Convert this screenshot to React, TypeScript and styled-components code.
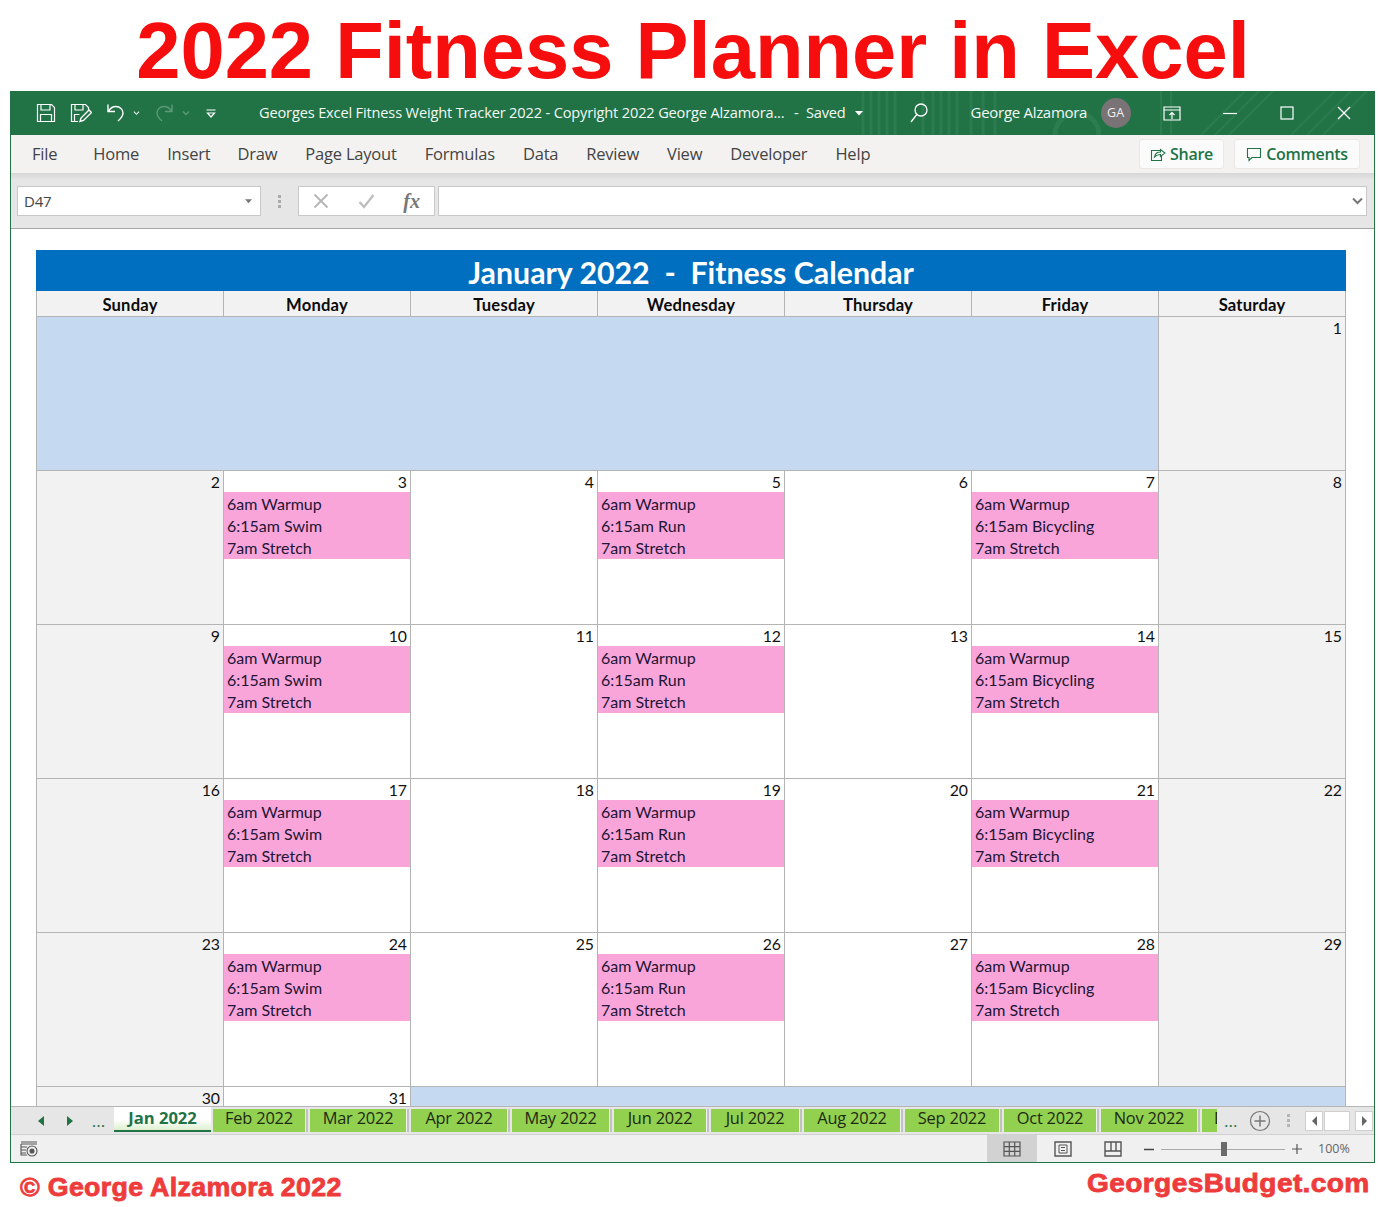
import React from "react";
import styled, { createGlobalStyle } from "styled-components";

const Global = createGlobalStyle`
  html, body { margin: 0; padding: 0; background: #fff; }
  body { font-family: "Open Sans", "Liberation Sans", sans-serif; }
`;

const Page = styled.div`
  width: 1380px;
  height: 1207px;
  display: flex;
  flex-direction: column;
  overflow: hidden;
  background: #fff;
`;

const Heading = styled.h1`
  margin: 0;
  height: 91px;
  flex: none;
  box-sizing: border-box;
  display: flex;
  align-items: center;
  justify-content: center;
  padding: 11px 0 0 6px;
  font: 700 79.5px/1 "Liberation Sans", Arial, sans-serif;
  color: #f60d0d;
  white-space: nowrap;
`;

const Window = styled.div`
  margin-left: 10px;
  width: 1365px;
  height: 1072px;
  flex: none;
  box-sizing: border-box;
  border: 1px solid #217346;
  border-top: 0;
  display: flex;
  flex-direction: column;
  background: #fff;
`;

const TitleBar = styled.div`
  height: 44px;
  flex: none;
  position: relative;
  background: #217346;
  display: flex;
  align-items: center;
  padding-left: 17px;
  color: #fff;
  overflow: hidden;
`;

const TitleTexture = styled.svg`
  position: absolute;
  left: 0;
  top: 0;
  pointer-events: none;
`;

const Slot = styled.div<{ $w: number; $ml?: number }>`
  width: ${(p) => p.$w}px;
  margin-left: ${(p) => p.$ml ?? 0}px;
  flex: none;
  height: 100%;
  display: flex;
  align-items: center;
  justify-content: center;
  position: relative;
`;

const DocTitle = styled.div`
  position: relative;
  margin-left: 33px;
  padding-bottom: 2px;
  font: 400 14.6px/1 "Open Sans", sans-serif;
  letter-spacing: -0.16px;
  white-space: nowrap;
  color: #f2f7f4;
`;

const SavedLabel = styled.span`
  margin-left: 6px;
`;

const UserName = styled.div`
  position: relative;
  margin-left: 41px;
  width: 117px;
  padding-bottom: 1px;
  font: 400 15px/1 "Open Sans", sans-serif;
  letter-spacing: -0.3px;
  white-space: nowrap;
  color: #f2f7f4;
`;

const Avatar = styled.div`
  position: relative;
  margin-left: 13px;
  width: 30px;
  height: 30px;
  border-radius: 50%;
  flex: none;
  background: #7a7375;
  color: #f0eeee;
  display: flex;
  align-items: center;
  justify-content: center;
  font: 400 12.5px/1 "Open Sans", sans-serif;
`;

const RibbonTabs = styled.div`
  height: 38px;
  flex: none;
  box-sizing: border-box;
  background: #f3f2f1;
  display: flex;
  align-items: center;
  padding-left: 21px;
  color: #444;
  font: 400 16.5px/1 "Open Sans", sans-serif;
  letter-spacing: -0.2px;
`;

const RibbonTab = styled.div<{ $ml: number }>`
  margin-left: ${(p) => p.$ml}px;
  white-space: nowrap;
`;

const RibbonRight = styled.div`
  margin-left: auto;
  margin-right: 14px;
  display: flex;
  gap: 10px;
`;

const RibbonButton = styled.div<{ $w: number }>`
  width: ${(p) => p.$w}px;
  height: 30px;
  box-sizing: border-box;
  background: #fbfbfb;
  border: 1px solid #e9e8e7;
  border-radius: 3px;
  display: flex;
  align-items: center;
  justify-content: center;
  gap: 4px;
  color: #217346;
  font: 600 16px/1 "Open Sans", sans-serif;
  letter-spacing: -0.3px;
`;

const FormulaBar = styled.div`
  height: 56px;
  flex: none;
  box-sizing: border-box;
  padding: 13px 7px 12px 6px;
  display: flex;
  align-items: stretch;
  background: linear-gradient(#d6d6d6 0, #e6e6e6 7px, #e6e6e6 100%);
  border-bottom: 1px solid #a5a5a5;
`;

const FieldBox = styled.div`
  background: #fff;
  border: 1px solid #c8c8c8;
  box-sizing: border-box;
  display: flex;
  align-items: center;
`;

const NameBox = styled(FieldBox)`
  width: 244px;
  padding: 0 8px 0 6px;
  justify-content: space-between;
  font: 400 15px/1 "Open Sans", sans-serif;
  letter-spacing: -0.2px;
  color: #444;
`;

const Grip = styled.div`
  width: 37px;
  display: flex;
  align-items: center;
  justify-content: center;
`;

const FxBox = styled(FieldBox)`
  width: 137px;
  padding: 0 14px;
  justify-content: space-between;
`;

const FxLabel = styled.span`
  font: italic 700 20px/1 "Liberation Serif", serif;
  color: #777;
`;

const Input = styled(FieldBox)`
  flex: 1;
  margin-left: 3px;
  justify-content: flex-end;
  padding-right: 3px;
`;

const Sheet = styled.div`
  flex: 1;
  min-height: 0;
  overflow: hidden;
  padding: 21px 0 0 25px;
  background: #fff;
`;

const Calendar = styled.div`
  width: 1310px;
  display: grid;
  grid-template-columns: repeat(7, 187px) 1px;
  grid-auto-rows: 154px;
  grid-template-rows: 41px 25px;
  font-family: Lato, "Liberation Sans", sans-serif;
  color: #111;
`;

const Banner = styled.div`
  grid-column: 1 / -1;
  background: #006fc0;
  color: #fff;
  display: flex;
  align-items: center;
  justify-content: center;
  font: 700 30.3px/1 Lato, sans-serif;
  white-space: pre;
  padding-top: 3px;
  box-sizing: border-box;
`;

const Weekday = styled.div`
  background: #f2f2f2;
  border-left: 1px solid #b4b4b4;
  box-sizing: border-box;
  display: flex;
  align-items: center;
  justify-content: center;
  font: 700 16.6px/1 Lato, sans-serif;
  letter-spacing: 0.2px;
  color: #0c0c0c;
  padding-top: 3px;
`;

const RightRule = styled.div`
  background: #b4b4b4;
`;

const Blank = styled.div<{ $span: number }>`
  grid-column: span ${(p) => p.$span};
  background: #c5d9f1;
  box-sizing: border-box;
  border-top: 1px solid #b4b4b4;
  border-left: 1px solid #b4b4b4;
`;

const Day = styled.div<{ $weekend?: boolean }>`
  background: ${(p) => (p.$weekend ? "#f2f2f2" : "#fff")};
  box-sizing: border-box;
  border-top: 1px solid #b4b4b4;
  border-left: 1px solid #b4b4b4;
  display: flex;
  flex-direction: column;
`;

const DayNumber = styled.div`
  height: 21px;
  flex: none;
  text-align: right;
  padding-right: 3px;
  font: 400 15.8px/22px Lato, sans-serif;
  color: #111;
`;

const Workout = styled.div`
  height: 67px;
  flex: none;
  background: #f9a5da;
  padding: 1px 0 0 3px;
  box-sizing: border-box;
  font: 400 16px/22px Lato, sans-serif;
  color: #231535;
  white-space: nowrap;
`;

const TabBar = styled.div`
  height: 29px;
  flex: none;
  box-sizing: border-box;
  display: flex;
  background: #e6e6e6;
  border-top: 1px solid #b5b5b5;
  border-bottom: 1px solid #d0d0d0;
`;

const TabNav = styled.div`
  width: 103px;
  flex: none;
  display: flex;
  align-items: center;
  padding-left: 15px;
  box-sizing: border-box;
`;

const NavCell = styled.div`
  width: 29px;
  flex: none;
  display: flex;
  align-items: center;
  justify-content: center;
`;

const Ellipsis = styled.span`
  font: 400 17px/1 "Open Sans", sans-serif;
  color: #217346;
`;

const ActiveTab = styled.div`
  width: 97px;
  height: 25px;
  flex: none;
  box-sizing: border-box;
  background: linear-gradient(#fff 55%, #dcefcf 100%);
  border-bottom: 2px solid #217346;
  color: #217346;
  font: 700 16.6px/21px "Open Sans", sans-serif;
  letter-spacing: 0;
  text-align: center;
  margin-right: 2px;
`;

const SheetTab = styled.div<{ $w: number }>`
  width: ${(p) => p.$w}px;
  height: 23px;
  margin: 2px 5px 0 0;
  flex: none;
  background: #92d050;
  box-shadow: 1px 0 0 #f2f2f2, 3px 0 0 #c2c2c2;
  color: #1d2a12;
  font: 400 16.4px/17px "Open Sans", sans-serif;
  letter-spacing: -0.2px;
  text-align: center;
  white-space: nowrap;
`;

const ClippedTab = styled(SheetTab)`
  text-align: left;
  padding-left: 12px;
  margin-right: 0;
  box-sizing: border-box;
  box-shadow: none;
  overflow: hidden;
`;

const TabTail = styled.div`
  flex: 1;
  display: flex;
  align-items: center;
  padding-left: 7px;
  position: relative;
`;

const TailDots = styled(Ellipsis)`
  width: 25px;
`;

const ScrollBox = styled.div<{ $w: number; $ml: number }>`
  width: ${(p) => p.$w}px;
  margin-left: ${(p) => p.$ml}px;
  height: 20px;
  flex: none;
  background: #fff;
  border: 1px solid #cfcfcf;
  box-sizing: border-box;
  display: flex;
  align-items: center;
  justify-content: center;
`;

const StatusBar = styled.div`
  height: 27px;
  flex: none;
  background: #f0f0f0;
  display: flex;
  align-items: center;
  padding-left: 9px;
  color: #555;
`;

const ViewButton = styled.div<{ $on?: boolean; $ml?: number }>`
  width: 50px;
  height: 100%;
  margin-left: ${(p) => p.$ml ?? 0}px;
  background: ${(p) => (p.$on ? "#d2d2d2" : "transparent")};
  display: flex;
  align-items: center;
  justify-content: center;
`;

const ZoomSlider = styled.div`
  width: 124px;
  height: 1px;
  margin: 1px 6px 0;
  background: #aaa;
  position: relative;
`;

const ZoomThumb = styled.div`
  position: absolute;
  left: 60px;
  top: -7px;
  width: 6px;
  height: 14px;
  background: #6b6b6b;
`;

const ZoomPct = styled.div`
  margin-left: 15px;
  padding-top: 2px;
  font: 400 12.5px/1 "Open Sans", sans-serif;
  color: #666;
`;

const ZoomSign = styled.div<{ $ml?: number }>`
  width: 12px;
  margin-left: ${(p) => p.$ml ?? 0}px;
  padding-top: 1px;
  display: flex;
  justify-content: center;
`;

const Footer = styled.div`
  flex: 1;
  display: flex;
  justify-content: space-between;
  padding: 8px 10px 0 20px;
  color: #ee3c3c;
  font: 700 25px/1 "Liberation Sans", sans-serif;
  -webkit-text-stroke: 0.8px #ee3c3c;
  white-space: nowrap;
`;

const FooterLeft = styled.div`
  padding-top: 4px;
  letter-spacing: 0.3px;
  transform: scaleX(1.07);
  transform-origin: left center;
`;

const FooterRight = styled.div`
  font-size: 26px;
  letter-spacing: 0.35px;
  margin-top: -1px;
  transform: scaleX(1.08);
  transform-origin: right center;
`;

const Stroke: React.FC<{ w: number; h: number; c?: string; sw?: number; children: React.ReactNode }> = ({
  w,
  h,
  c = "#fff",
  sw = 1.2,
  children,
}) => (
  <svg width={w} height={h} viewBox={`0 0 ${w} ${h}`} fill="none" stroke={c} strokeWidth={sw}>
    {children}
  </svg>
);

const Chevron = ({ c = "#e8f0ec" }: { c?: string }) => (
  <Stroke w={8} h={6} c={c} sw={1.3}>
    <path d="M1 1.500 4 4.500 7 1.500" />
  </Stroke>
);

const Caret = ({ c = "#fff", w = 8 }: { c?: string; w?: number }) => (
  <svg width={w} height={5} viewBox="0 0 8 5">
    <path d="M0 0h8L4 4.500z" fill={c} />
  </svg>
);

const weekdays = ["Sunday", "Monday", "Tuesday", "Wednesday", "Thursday", "Friday", "Saturday"];
const sport: Record<number, string> = { 1: "Swim", 3: "Run", 5: "Bicycling" };

const tabs: [string, number][] = [
  ["Feb 2022", 92],
  ["Mar 2022", 96],
  ["Apr 2022", 96],
  ["May 2022", 97],
  ["Jun 2022", 92],
  ["Jul 2022", 88],
  ["Aug 2022", 96],
  ["Sep 2022", 94],
  ["Oct 2022", 92],
  ["Nov 2022", 96],
];

const ribbon: [string, number][] = [
  ["File", 0],
  ["Home", 36],
  ["Insert", 28],
  ["Draw", 27],
  ["Page Layout", 28],
  ["Formulas", 28],
  ["Data", 28],
  ["Review", 28],
  ["View", 28],
  ["Developer", 28],
  ["Help", 28],
];

const weeks = [2, 9, 16, 23];

export default function App() {
  return (
    <Page>
      <Global />
      <Heading>2022 Fitness Planner in Excel</Heading>
      <Window>
        <TitleBar>
          <TitleTexture width={1363} height={44} viewBox="0 0 1363 44" fill="none">
            <g stroke="#2b7d50" strokeWidth="3">
              <path d="M852 0v44M860 0v44M868 0v44M876 0v44M884 0v44M912 0v44M922 0v44M930 0v44M938 0v44M946 0v44M960 0v44M972 0v44M984 0v44" />
              <circle cx="1066" cy="44" r="22" strokeWidth="5" />
              <path d="M1150 0v44M1160 0v44" strokeWidth="2" />
              <path d="M1190 44 1234 0M1204 44 1248 0M1218 44 1262 0M1280 44 1324 0M1296 44 1340 0M1312 44 1356 0" strokeWidth="2" />
            </g>
          </TitleTexture>
          <Slot $w={35}>
            <Stroke w={20} h={20}>
              <path d="M1.500 1.500h14l3 3v14h-17zM5 1.500v5.500h9V1.500M4.500 18.500v-7h11v7" />
            </Stroke>
          </Slot>
          <Slot $w={35}>
            <Stroke w={22} h={20}>
              <path d="M8 18.500H1.500v-17h14l3 3v3M5 1.500v5.500h8V1.500M4.500 18.500v-7h5" />
              <path d="M10 18.500l1-3.500 8-8 2.500 2.500-8 8z" strokeWidth="1.400" />
            </Stroke>
          </Slot>
          <Slot $w={35}>
            <Stroke w={20} h={20} sw={1.4}>
              <path d="M2 1.500v7h7M2.500 8.500C4 5.500 7 3.500 10 3.500c4 0 7 3 7 6.500 0 3-1.500 5-5 8" />
            </Stroke>
          </Slot>
          <Slot $w={7}>
            <Chevron />
          </Slot>
          <Slot $w={36} $ml={6}>
            <Stroke w={20} h={20} c="#5b9a77" sw={1.4}>
              <path d="M18 1.500v7h-7M17.500 8.500C16 5.500 13 3.500 10 3.500c-4 0-7 3-7 6.500 0 3 1.500 5 5 8" />
            </Stroke>
          </Slot>
          <Slot $w={8}>
            <Chevron c="#5b9a77" />
          </Slot>
          <Slot $w={30} $ml={6}>
            <Stroke w={10} h={9} sw={1.2}>
              <path d="M0.500 1h9M1.500 4 5 8l3.500-4z" />
            </Stroke>
          </Slot>
          <DocTitle>
            Georges Excel Fitness Weight Tracker 2022 - Copyright 2022 George Alzamora...
            <SavedLabel> - &nbsp;Saved</SavedLabel>
          </DocTitle>
          <Slot $w={10} $ml={8}>
            <Caret w={8} />
          </Slot>
          <Slot $w={22} $ml={44}>
            <Stroke w={20} h={22} sw={1.3}>
              <circle cx="12" cy="8" r="6" />
              <path d="M7.800 12.500 2 20" />
            </Stroke>
          </Slot>
          <UserName>George Alzamora</UserName>
          <Avatar>GA</Avatar>
          <Slot $w={57} $ml={13}>
            <Stroke w={18} h={15} sw={1.2}>
              <path d="M1 1h16v13H1zM1 4h16" />
              <path d="M9 13V6.500M6.500 9 9 6.500 11.500 9" />
            </Stroke>
          </Slot>
          <Slot $w={57} $ml={1}>
            <Stroke w={14} h={14}>
              <path d="M0 7.500h14" />
            </Stroke>
          </Slot>
          <Slot $w={57}>
            <Stroke w={14} h={14}>
              <rect x="1" y="1" width="12" height="12" />
            </Stroke>
          </Slot>
          <Slot $w={57}>
            <Stroke w={14} h={14} sw={1.3}>
              <path d="M1 1l12 12M13 1 1 13" />
            </Stroke>
          </Slot>
        </TitleBar>

        <RibbonTabs>
          {ribbon.map(([t, ml]) => (
            <RibbonTab key={t} $ml={ml}>
              {t}
            </RibbonTab>
          ))}
          <RibbonRight>
            <RibbonButton $w={85}>
              <Stroke w={16} h={15} c="#217346" sw={1.1}>
                <path d="M10 3.500H1.500v10h10V9" />
                <path d="M4.500 10c.5-3 3-5 6-5V2.500L15 6l-4.500 3.500V7.500c-2.500 0-4.500 1-6 2.500z" />
              </Stroke>
              Share
            </RibbonButton>
            <RibbonButton $w={126}>
              <Stroke w={16} h={15} c="#217346" sw={1.1}>
                <path d="M1.500 1.500h13v9H6l-3 3v-3H1.500z" />
              </Stroke>
              Comments
            </RibbonButton>
          </RibbonRight>
        </RibbonTabs>

        <FormulaBar>
          <NameBox>
            D47
            <Caret c="#777" w={7} />
          </NameBox>
          <Grip>
            <svg width="3" height="13" viewBox="0 0 3 13" fill="#aaa">
              <rect y="0" width="3" height="3" />
              <rect y="5" width="3" height="3" />
              <rect y="10" width="3" height="3" />
            </svg>
          </Grip>
          <FxBox>
            <Stroke w={16} h={16} c="#b5b5b5" sw={1.8}>
              <path d="M1.500 1.500l13 13M14.500 1.500l-13 13" />
            </Stroke>
            <Stroke w={17} h={16} c="#bdbdbd" sw={2.2}>
              <path d="M1.500 9l4.500 5 9.500-12" />
            </Stroke>
            <FxLabel>fx</FxLabel>
          </FxBox>
          <Input>
            <Stroke w={11} h={8} c="#777" sw={2}>
              <path d="M1 1.500 5.500 6 10 1.500" />
            </Stroke>
          </Input>
        </FormulaBar>

        <Sheet>
          <Calendar>
            <Banner>January 2022  -  Fitness Calendar</Banner>
            {weekdays.map((d) => (
              <Weekday key={d}>{d}</Weekday>
            ))}
            <RightRule />
            <Blank $span={6} />
            <Day $weekend>
              <DayNumber>1</DayNumber>
            </Day>
            <RightRule />
            {weeks.map((start) => (
              <React.Fragment key={start}>
                {weekdays.map((_, i) => (
                  <Day key={i} $weekend={i === 0 || i === 6}>
                    <DayNumber>{start + i}</DayNumber>
                    {sport[i] && (
                      <Workout>
                        6am Warmup
                        <br />
                        6:15am {sport[i]}
                        <br />
                        7am Stretch
                      </Workout>
                    )}
                  </Day>
                ))}
                <RightRule />
              </React.Fragment>
            ))}
            <Day $weekend>
              <DayNumber>30</DayNumber>
            </Day>
            <Day>
              <DayNumber>31</DayNumber>
            </Day>
            <Blank $span={5} />
            <RightRule />
          </Calendar>
        </Sheet>

        <TabBar>
          <TabNav>
            <NavCell>
              <svg width="6" height="10" viewBox="0 0 6 10">
                <path d="M6 0v10L0 5z" fill="#217346" />
              </svg>
            </NavCell>
            <NavCell>
              <svg width="6" height="10" viewBox="0 0 6 10">
                <path d="M0 0v10l6-5z" fill="#217346" />
              </svg>
            </NavCell>
            <NavCell>
              <Ellipsis>...</Ellipsis>
            </NavCell>
          </TabNav>
          <ActiveTab>Jan 2022</ActiveTab>
          {tabs.map(([t, w]) => (
            <SheetTab key={t} $w={w}>
              {t}
            </SheetTab>
          ))}
          <ClippedTab $w={15}>Dec 2022</ClippedTab>
          <TabTail>
            <TailDots>...</TailDots>
            <Stroke w={22} h={22} c="#777" sw={1.2}>
              <circle cx="11" cy="11" r="9.500" />
              <path d="M11 5.500v11M5.500 11h11" strokeWidth="1.500" />
            </Stroke>
            <Slot $w={4} $ml={16}>
              <svg width="4" height="14" viewBox="0 0 4 14" fill="#b5b5b5">
                <rect y="0" width="3" height="3" />
                <rect y="5" width="3" height="3" />
                <rect y="10" width="3" height="3" />
              </svg>
            </Slot>
            <ScrollBox $w={18} $ml={14}>
              <svg width="5" height="10" viewBox="0 0 5 10">
                <path d="M5 0v10L0 5z" fill="#666" />
              </svg>
            </ScrollBox>
            <ScrollBox $w={26} $ml={1} />
            <ScrollBox $w={18} $ml={5}>
              <svg width="5" height="10" viewBox="0 0 5 10">
                <path d="M0 0v10l5-5z" fill="#666" />
              </svg>
            </ScrollBox>
          </TabTail>
        </TabBar>

        <StatusBar>
          <Stroke w={18} h={16} c="#555" sw={1.1}>
            <path d="M1 1h16M1 3h16M1 3v11h6M1 6h6M1 9h5M1 12h5" />
            <circle cx="12" cy="10" r="5" />
            <circle cx="12" cy="10" r="2" fill="#555" />
          </Stroke>
          <ViewButton $on $ml={949}>
            <Stroke w={18} h={16} c="#555" sw={1.2}>
              <path d="M1 1h16v14H1zM1 5.700h16M1 10.300h16M6.300 1v14M11.700 1v14" />
            </Stroke>
          </ViewButton>
          <ViewButton $ml={1}>
            <Stroke w={18} h={16} c="#555" sw={1.4}>
              <path d="M1 1h16v14H1z" />
              <path d="M5 4h8v8H5zM7 6.500h4M7 9.500h4" strokeWidth="1" />
            </Stroke>
          </ViewButton>
          <ViewButton>
            <Stroke w={18} h={16} c="#555" sw={1.4}>
              <path d="M1 1h16v14H1zM1 10h16M7 1v9M12 1v9" />
            </Stroke>
          </ViewButton>
          <ZoomSign $ml={5}>
            <Stroke w={10} h={3} c="#444" sw={1.5}>
              <path d="M0 1.500h10" />
            </Stroke>
          </ZoomSign>
          <ZoomSlider>
            <ZoomThumb />
          </ZoomSlider>
          <ZoomSign>
            <Stroke w={10} h={10} c="#555">
              <path d="M0 5h10M5 0v10" />
            </Stroke>
          </ZoomSign>
          <ZoomPct>100%</ZoomPct>
        </StatusBar>
      </Window>
      <Footer>
        <FooterLeft>© George Alzamora 2022</FooterLeft>
        <FooterRight>GeorgesBudget.com</FooterRight>
      </Footer>
    </Page>
  );
}
